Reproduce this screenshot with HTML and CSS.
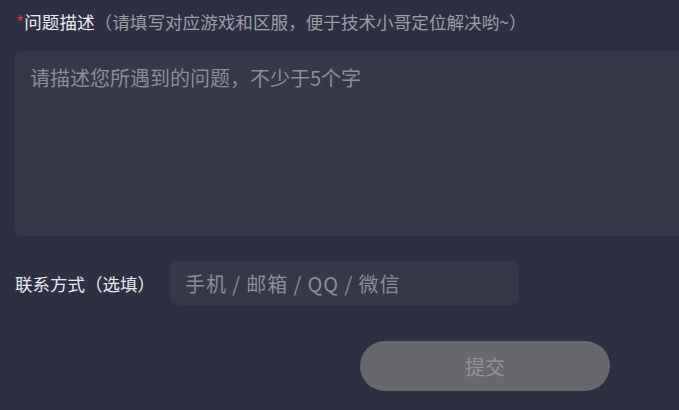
FILE: index.html
```html
<!DOCTYPE html>
<html lang="zh-CN">
<head>
<meta charset="utf-8">
<title>问题反馈</title>
<link rel="stylesheet" href="styles.css">
</head>
<body>
<div class="page">
  <div class="field-label"><span class="req">*</span>问题描述<span class="hint">（请填写对应游戏和区服，便于技术小哥定位解决哟~）</span></div>
  <textarea class="desc" placeholder="请描述您所遇到的问题，不少于5个字"></textarea>
  <div class="contact-row">
    <div class="contact-label">联系方式（选填）</div>
    <input class="contact-input" type="text" placeholder="手机 / 邮箱 / QQ / 微信">
  </div>
  <div class="actions">
    <button class="submit" type="button">提交</button>
  </div>
</div>
</body>
</html>
```
FILE: styles.css
```css
html, body {
  margin: 0;
  padding: 0;
  background: #2d2f43;
  overflow: hidden;
  width: 679px;
  height: 410px;
}
.page {
  padding: 12px 0 0 15px;
  font-family: "Noto Sans CJK SC", "Noto Sans", sans-serif;
  color: #e8e8ec;
}
.field-label {
  font-size: 17.6px;
  line-height: 20px;
  color: #e9e9ee;
  white-space: nowrap;
}
.req {
  color: #e8343a;
  margin-left: 1px;
}
.hint {
  color: #9c9da6;
}
.desc {
  display: block;
  box-sizing: border-box;
  margin-top: 19px;
  width: 664px;
  height: 185px;
  border: none;
  outline: none;
  resize: none;
  background: #363849;
  border-radius: 6px 0 0 6px;
  padding: 12px 15px;
  font-family: inherit;
  font-size: 20px;
  line-height: 30px;
  color: #e8e8ec;
}
.desc::placeholder,
.contact-input::placeholder {
  color: #8b8d96;
  opacity: 1;
}
.contact-row {
  display: flex;
  align-items: center;
  margin-top: 25px;
  height: 44px;
}
.contact-label {
  width: 155px;
  font-size: 17.5px;
  color: #e9e9ee;
  white-space: nowrap;
}
.contact-input {
  box-sizing: border-box;
  width: 349px;
  height: 44px;
  border: none;
  outline: none;
  background: #363849;
  border-radius: 8px;
  padding: 0 15px;
  font-family: inherit;
  font-size: 20px;
  letter-spacing: 0.9px;
  color: #e8e8ec;
}
.actions {
  display: flex;
  padding-left: 345px;
  margin-top: 36px;
}
.submit {
  width: 250px;
  height: 50px;
  border: none;
  border-radius: 25px;
  background: #67686c;
  color: #929397;
  font-family: inherit;
  font-size: 20px;
  padding: 0;
}
```
